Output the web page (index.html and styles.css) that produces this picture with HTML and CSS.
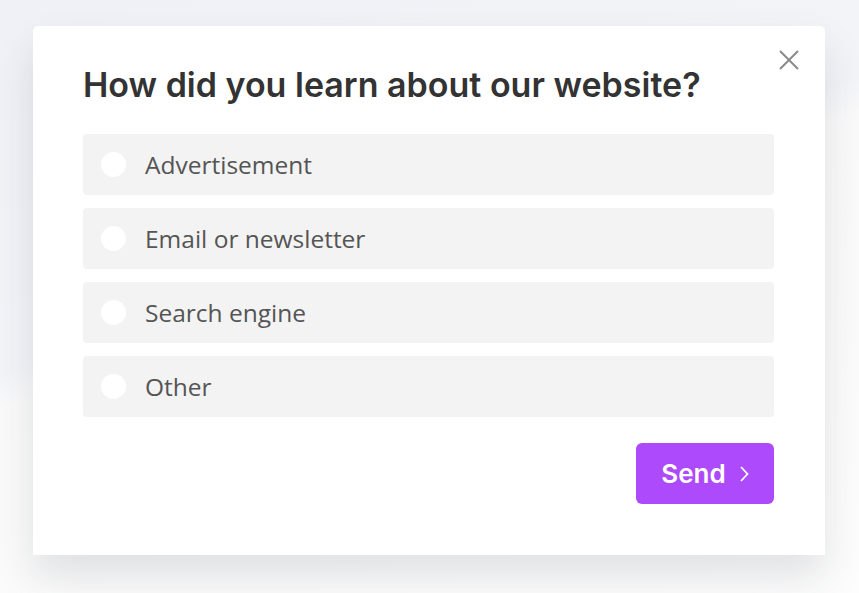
FILE: index.html
```html
<!DOCTYPE html>
<html lang="en">
<head>
    <meta charset="UTF-8">
    <title>Survey</title>
    <link rel="stylesheet" href="styles.css">
</head>
<body>
    <div class="modal">
        <button class="close" aria-label="Close">
            <svg width="20" height="20" viewBox="0 0 20 20"><path d="M1 1L19 19M19 1L1 19" stroke="#8a8a8a" stroke-width="2" fill="none"/></svg>
        </button>
        <h1 class="title">How did you learn about our website?</h1>
        <ul class="options">
            <li class="option"><span class="radio"></span>Advertisement</li>
            <li class="option"><span class="radio"></span>Email or newsletter</li>
            <li class="option"><span class="radio"></span>Search engine</li>
            <li class="option"><span class="radio"></span>Other</li>
        </ul>
        <div class="actions">
            <button class="send">Send
                <svg width="10" height="18" viewBox="0 0 10 18"><path d="M2 2L8.5 9L2 16" stroke="#fff" stroke-width="1.8" fill="none"/></svg>
            </button>
        </div>
    </div>
</body>
</html>
```

FILE: styles.css
```css
body,h1,ul,li,button{
    padding: 0;
    margin: 0;
}
ul{
    list-style-type: none;
}
html,body{
    height: 100%;
}
body{
    overflow: hidden;
    background: linear-gradient(161deg, #eff1f6 0%, #f3f4f8 42%, #fafafa 46%, #fdfdfd 100%);
    font-family: "Open Sans", sans-serif;
}
.modal{
    position: relative;
    width: 792px;
    box-sizing: border-box;
    margin: 26px 0 0 33px;
    padding: 39px 51px 51px 50px;
    background-color: #fff;
    border-radius: 5px 5px 0 0;
    box-shadow: 0 22px 40px rgba(40,45,60,.13);
}
.close{
    position: absolute;
    top: 24px;
    right: 26px;
    width: 20px;
    height: 20px;
    border: none;
    background: none;
    cursor: pointer;
}
.close svg{
    display: block;
}
.title{
    font-family: Inter, sans-serif;
    font-size: 34px;
    font-weight: 600;
    line-height: 40px;
    color: #333;
    margin-bottom: 29px;
}
.options{
    display: flex;
    flex-direction: column;
    gap: 13px;
}
.option{
    display: flex;
    align-items: center;
    height: 61px;
    padding-left: 18px;
    background-color: #f3f3f3;
    border-radius: 4px;
    font-size: 24.5px;
    color: #555;
    cursor: pointer;
}
.radio{
    width: 25px;
    height: 25px;
    border-radius: 50%;
    background-color: #fff;
    margin-right: 19px;
}
.actions{
    display: flex;
    justify-content: flex-end;
    margin-top: 26px;
}
.send{
    display: flex;
    align-items: center;
    justify-content: center;
    gap: 13px;
    width: 138px;
    height: 61px;
    border: none;
    border-radius: 6px;
    background-color: #ac4afc;
    color: #fff;
    font-family: Inter, sans-serif;
    font-size: 26px;
    font-weight: 600;
    cursor: pointer;
}
```
